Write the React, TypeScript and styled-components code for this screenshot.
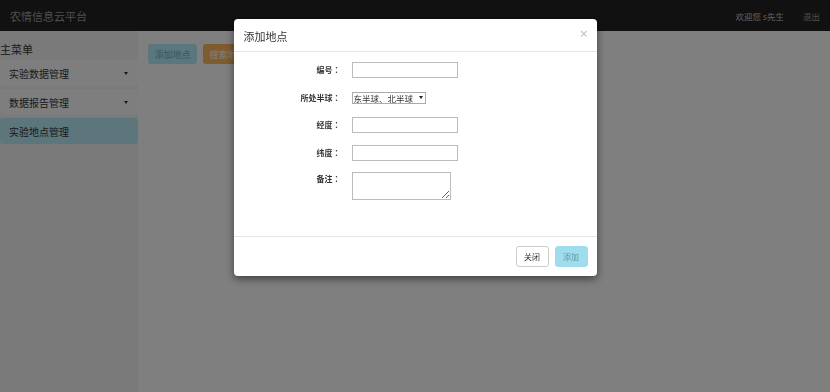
import React from "react";
import styled, {createGlobalStyle} from "styled-components";

const GlobalStyle = createGlobalStyle`
  html, body {
    margin: 0;
    padding: 0;
    height: 100%;
    background: #fff;
    font-family: "Noto Sans CJK SC", "Noto Sans", "Liberation Sans", sans-serif;
    color: #333;
  }
  #root {
    min-height: 100%;
  }
`

const Page = styled.div`
  min-height: 100vh;
  display: flex;
  flex-direction: column;
`

const Navbar = styled.div`
  height: 31px;
  flex: none;
  background: #222;
  display: flex;
  align-items: center;
  padding: 0 10px;
`

const Brand = styled.div`
  color: #9d9d9d;
  font-size: 11px;
  flex: 1;
`

const NavRight = styled.div`
  display: flex;
  align-items: center;
  gap: 19px;
  font-size: 8.5px;
  color: #9d9d9d;
`

const Welcome = styled.span`
  color: #c4c4c4;
`

const Layout = styled.div`
  flex: 1;
  display: flex;
`

const Sidebar = styled.div`
  width: 138px;
  flex: none;
  background: #f5f5f5;
`

const MenuTitle = styled.div`
  font-size: 11px;
  line-height: 18px;
  padding: 9px 0 2px;
  color: #333;
`

const MenuItem = styled.div<{ $active?: boolean }>`
  height: 26px;
  margin-bottom: 3px;
  display: flex;
  align-items: center;
  justify-content: space-between;
  padding: 0 10px 0 9px;
  font-size: 10px;
  border-radius: 3px;
  background: ${p => p.$active ? "#b9ecf8" : "#fcfcfc"};
  color: #333;
`

const Caret = styled.span`
  width: 0;
  height: 0;
  border-left: 2.5px solid transparent;
  border-right: 2.5px solid transparent;
  border-top: 3px solid #333;
`

const Main = styled.div`
  flex: 1;
  padding: 13px 10px;
  display: flex;
  align-items: flex-start;
  gap: 6px;
`

const ToolButton = styled.button<{ $tone: "info" | "warning" }>`
  height: 20px;
  width: 49px;
  border: 0;
  border-radius: 3px;
  font-family: inherit;
  font-size: 9px;
  padding: 0;
  color: ${p => p.$tone === "info" ? "#6aaccc" : "#fff"};
  background: ${p => p.$tone === "info" ? "#b4eefc" : "#ffb85c"};
`

const Backdrop = styled.div`
  position: fixed;
  inset: 0;
  background: rgba(0, 0, 0, 0.5);
`

const ModalWrap = styled.div`
  position: fixed;
  inset: 0;
  display: flex;
  justify-content: center;
  align-items: flex-start;
`

const Dialog = styled.div`
  width: 363px;
  margin-top: 19px;
  background: #fff;
  border-radius: 4px;
  box-shadow: 0 3px 9px rgba(0, 0, 0, 0.5);
`

const Header = styled.div`
  height: 32px;
  border-bottom: 1px solid #e5e5e5;
  display: flex;
  align-items: center;
  justify-content: space-between;
  padding: 0 9px 0 10px;
`

const Title = styled.div`
  font-size: 11px;
  color: #333;
  margin-top: 2px;
`

const Close = styled.span`
  font-size: 13px;
  font-weight: bold;
  color: #000;
  opacity: 0.2;
  line-height: 1;
  margin-top: -4px;
  font-family: "Liberation Sans", sans-serif;
`

const Body = styled.div`
  padding: 10px 15px 36px;
`

const Form = styled.div`
  display: grid;
  grid-template-columns: 92px 1fr;
  grid-template-rows: repeat(4, 16px) auto;
  column-gap: 11px;
  row-gap: 11.5px;
  align-items: center;
`

const Label = styled.label<{ $top?: boolean }>`
  text-align: right;
  font-size: 8px;
  line-height: 12px;
  font-weight: bold;
  color: #333;
  align-self: ${p => p.$top ? "start" : "center"};
  padding-top: ${p => p.$top ? "1px" : "0"};
`

const Colon = styled.span`
  font-family: "Noto Sans CJK TC", sans-serif;
`

const Input = styled.input`
  display: block;
  width: 106px;
  height: 16px;
  box-sizing: border-box;
  border: 1px solid #bbb;
  padding: 0 3px;
  font-size: 8px;
  outline: none;
`

const SelectBox = styled.span`
  position: relative;
  display: block;
  width: 74px;
  height: 12px;
`

const Select = styled.select`
  appearance: none;
  display: block;
  width: 100%;
  height: 12px;
  box-sizing: border-box;
  border: 1px solid #aaa;
  border-radius: 0;
  background: #fff;
  font-family: inherit;
  font-size: 8.5px;
  line-height: 10px;
  padding: 0 0 0 1px;
  color: #333;
  outline: none;
`

const Arrow = styled.span`
  position: absolute;
  right: 3px;
  top: 4px;
  width: 0;
  height: 0;
  border-left: 2px solid transparent;
  border-right: 2px solid transparent;
  border-top: 3.5px solid #222;
  pointer-events: none;
`

const TextArea = styled.textarea`
  display: block;
  width: 99px;
  height: 28px;
  box-sizing: border-box;
  border: 1px solid #bbb;
  padding: 2px;
  font-size: 8px;
  align-self: start;
`

const Footer = styled.div`
  border-top: 1px solid #e5e5e5;
  padding: 9px 9px 9px;
  display: flex;
  justify-content: flex-end;
  gap: 6px;
`

const FooterButton = styled.button<{ $primary?: boolean }>`
  height: 21px;
  width: 33px;
  border-radius: 3px;
  font-family: inherit;
  font-size: 8px;
  padding: 0;
  border: 1px solid ${p => p.$primary ? "#9fdcec" : "#ccc"};
  background: ${p => p.$primary ? "#9fdcec" : "#fff"};
  color: ${p => p.$primary ? "#5d96a8" : "#333"};
`

const menus = [
  {label: "实验数据管理", caret: true},
  {label: "数据报告管理", caret: true},
  {label: "实验地点管理", active: true},
]

export default function App() {
  return (
    <Page>
      <GlobalStyle/>
      <Navbar>
        <Brand>农情信息云平台</Brand>
        <NavRight>
          <Welcome>欢迎您 s先生</Welcome>
          <span>退出</span>
        </NavRight>
      </Navbar>
      <Layout>
        <Sidebar>
          <MenuTitle>主菜单</MenuTitle>
          {menus.map(m => (
            <MenuItem key={m.label} $active={m.active}>
              {m.label}
              {m.caret && <Caret/>}
            </MenuItem>
          ))}
        </Sidebar>
        <Main>
          <ToolButton $tone="info">添加地点</ToolButton>
          <ToolButton $tone="warning">搜索地点</ToolButton>
        </Main>
      </Layout>

      <Backdrop/>
      <ModalWrap>
        <Dialog>
          <Header>
            <Title>添加地点</Title>
            <Close>×</Close>
          </Header>
          <Body>
            <Form>
              <Label>编号<Colon>：</Colon></Label>
              <Input/>
              <Label>所处半球<Colon>：</Colon></Label>
              <SelectBox>
                <Select defaultValue="en">
                  <option value="en">东半球、北半球</option>
                  <option value="es">东半球、南半球</option>
                  <option value="wn">西半球、北半球</option>
                  <option value="ws">西半球、南半球</option>
                </Select>
                <Arrow/>
              </SelectBox>
              <Label>经度<Colon>：</Colon></Label>
              <Input/>
              <Label>纬度<Colon>：</Colon></Label>
              <Input/>
              <Label $top>备注<Colon>：</Colon></Label>
              <TextArea/>
            </Form>
          </Body>
          <Footer>
            <FooterButton>关闭</FooterButton>
            <FooterButton $primary>添加</FooterButton>
          </Footer>
        </Dialog>
      </ModalWrap>
    </Page>
  );
}
